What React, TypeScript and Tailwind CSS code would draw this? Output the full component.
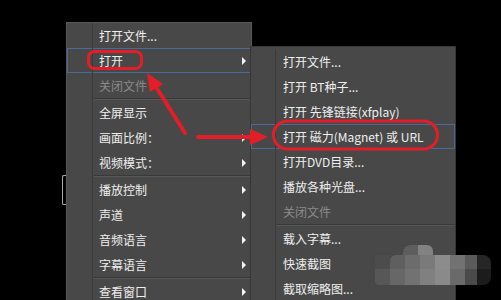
import React from 'react';

type Entry =
  | { kind: 'item'; label: string; sub?: boolean; disabled?: boolean; active?: boolean }
  | { kind: 'sep' };

const mainItems: Entry[] = [
  { kind: 'item', label: '打开文件...' },
  { kind: 'item', label: '打开', sub: true, active: true },
  { kind: 'item', label: '关闭文件', disabled: true },
  { kind: 'sep' },
  { kind: 'item', label: '全屏显示' },
  { kind: 'item', label: '画面比例：', sub: true },
  { kind: 'item', label: '视频模式：', sub: true },
  { kind: 'sep' },
  { kind: 'item', label: '播放控制', sub: true },
  { kind: 'item', label: '声道', sub: true },
  { kind: 'item', label: '音频语言', sub: true },
  { kind: 'item', label: '字幕语言', sub: true },
  { kind: 'sep' },
  { kind: 'item', label: '查看窗口', sub: true },
];

const openItems: Entry[] = [
  { kind: 'item', label: '打开文件...' },
  { kind: 'item', label: '打开 BT种子...' },
  { kind: 'item', label: '打开 先锋链接(xfplay)' },
  { kind: 'item', label: '打开 磁力(Magnet) 或 URL', active: true },
  { kind: 'item', label: '打开DVD目录...' },
  { kind: 'item', label: '播放各种光盘...' },
  { kind: 'item', label: '关闭文件', disabled: true },
  { kind: 'sep' },
  { kind: 'item', label: '载入字幕...' },
  { kind: 'item', label: '快速截图' },
  { kind: 'item', label: '截取缩略图...' },
];

const font = { fontFamily: '"Noto Sans CJK SC", "Noto Sans", sans-serif' };

// one menu panel, rows are 25px, separators 2px
const MenuList: React.FC<{ items: Entry[]; iconW: string; textPad: string }> = ({ items, iconW, textPad }) => (
  <div className="flex flex-col">
    {items.map((it, i) =>
      it.kind === 'sep' ? (
        <div key={i} className="flex h-[2px]">
          <div className={`${iconW} shrink-0 border-r border-r-[#3a3a3a]`} />
          <div className="flex-1 flex flex-col pl-[1px]">
            <div className="h-px bg-[#393939]" />
            <div className="h-px bg-[#565656]" />
          </div>
        </div>
      ) : (
        <div
          key={i}
          className={`flex h-[25px] items-center ${it.active ? 'ring-1 ring-inset ring-[#4a6a9c]' : ''}`}
        >
          <div className={`${iconW} shrink-0 self-stretch border-r border-r-[#3a3a3a]`} />
          <span
            className={`flex-1 ${textPad} text-[12px] leading-[17px] whitespace-nowrap ${
              it.disabled ? 'text-[#8a8a8a]' : 'text-[#efefef]'
            }`}
          >
            {it.label}
          </span>
          {it.sub && (
            <span className="mr-[5px] w-0 h-0 border-y-[4px] border-y-transparent border-l-[4px] border-l-[#f4f4f4]" />
          )}
        </div>
      )
    )}
  </div>
);

export default function App() {
  return (
    <div className="relative w-[501px] h-[300px] bg-black overflow-hidden" style={font}>
      {/* small bracket on the desktop */}
      <div className="absolute left-[62px] top-[175px] w-[4px] h-[30px] border-l border-y border-[#a8a8a8] rounded-l-[2px]" />

      {/* main context menu */}
      <div className="absolute left-[66px] top-[22px] w-[186px] h-[300px] bg-[#484848] border border-[#575757]">
        <MenuList items={mainItems} iconW="w-[26px]" textPad="pl-[6px]" />
      </div>

      {/* open submenu */}
      <div className="absolute left-[250px] top-[46px] w-[206px] h-[270px] bg-[#484848] border border-[#353535] pt-[2px]">
        <MenuList items={openItems} iconW="w-[25px]" textPad="pl-[7px]" />
      </div>

      {/* pixelated watermark */}
      <div className="absolute left-[375px] top-[245px] flex flex-col">
        <div className="flex pl-[28px] h-[10px]">
          <div className="w-[15px] bg-[#5e5e5e] rounded-tl-[8px]" />
          <div className="w-[15px] bg-[#828282] rounded-tr-[6px]" />
        </div>
        <div className="flex h-[14px]">
          <div className="w-[15px] bg-[#4c4c4c]" />
          <div className="w-[15px] bg-[#5f5f5f] rounded-tl-[6px]" />
          <div className="w-[15px] bg-[#6c6c6c]" />
          <div className="w-[15px] bg-[#7a7a7a]" />
          <div className="w-[15px] bg-[#8c8c8c]" />
          <div className="w-[15px] bg-[#727272]" />
          <div className="w-[12px] bg-[#5a5a5a]" />
          <div className="w-[14px] bg-[#262626] rounded-tr-[8px]" />
        </div>
        <div className="flex h-[16px]">
          <div className="w-[15px] bg-[#575757] rounded-bl-[4px]" />
          <div className="w-[15px] bg-[#676767]" />
          <div className="w-[15px] bg-[#727272]" />
          <div className="w-[15px] bg-[#808080]" />
          <div className="w-[15px] bg-[#8a8a8a]" />
          <div className="w-[15px] bg-[#6a6a6a]" />
          <div className="w-[12px] bg-[#4a4a4a]" />
          <div className="w-[14px] bg-[#1c1c1c] rounded-br-[8px]" />
        </div>
      </div>

      {/* red annotations */}
      <svg className="absolute left-0 top-0" width="501" height="300" viewBox="0 0 501 300">
        <rect x="88.5" y="51.5" width="53" height="17" rx="6" fill="none" stroke="#e31e28" strokeWidth="3" />
        <rect x="273.5" y="121" width="164" height="28" rx="14" fill="none" stroke="#e31e28" strokeWidth="3" />
        <line x1="185" y1="133" x2="156" y2="87" stroke="#e31e28" strokeWidth="4" strokeLinecap="round" />
        <polygon points="147,73 163,84 150,92" fill="#e31e28" />
        <line x1="198" y1="137" x2="252" y2="137" stroke="#e31e28" strokeWidth="4" strokeLinecap="round" />
        <polygon points="268,137 250,129 250,145" fill="#e31e28" />
      </svg>
    </div>
  );
}
